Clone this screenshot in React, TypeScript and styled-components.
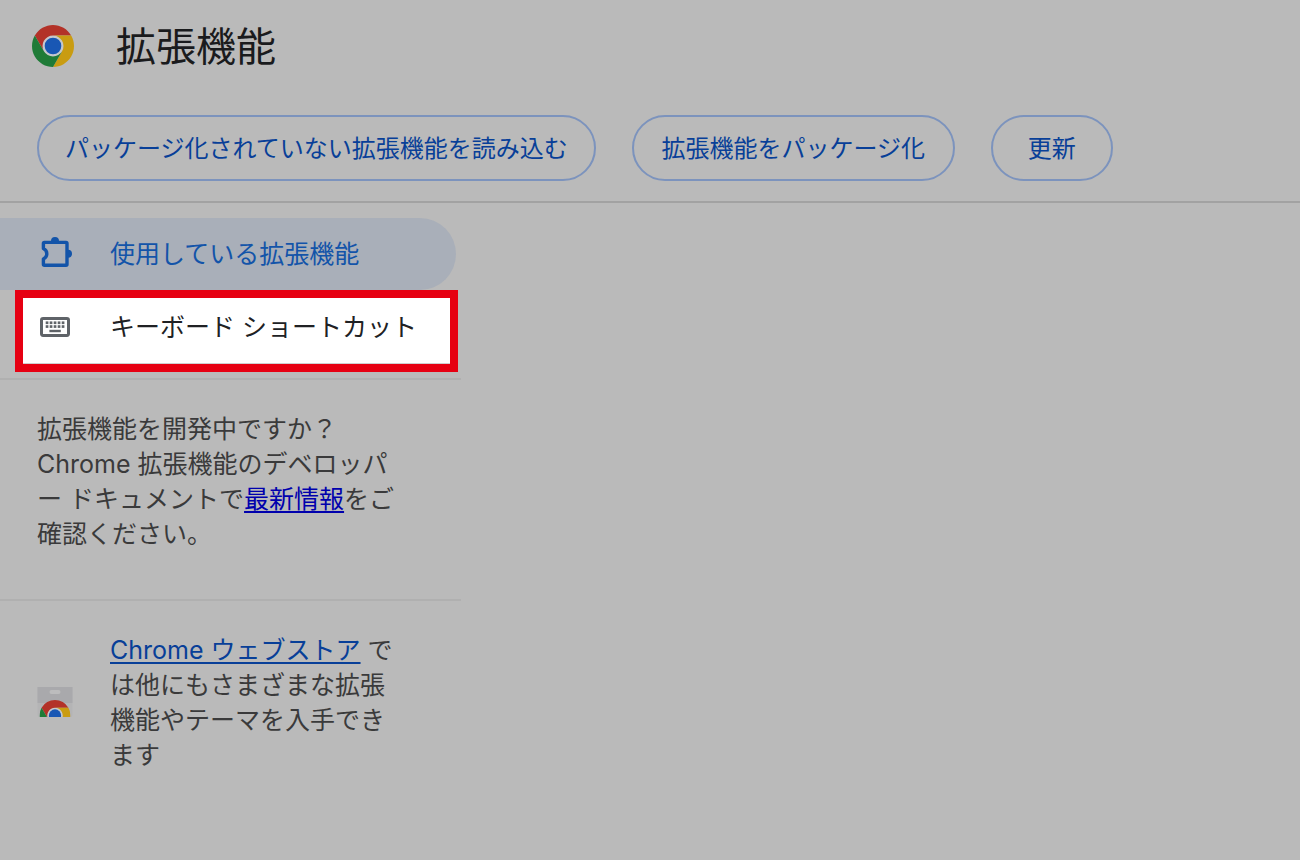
import React from "react";
import styled, { createGlobalStyle } from "styled-components";

const colors = {
  page: "#bababa",
  title: "#1a1b1d",
  body: "#3a3a3b",
  blue: "#083f98",
  navBlue: "#1354a9",
  plainLink: "#0000ad",
  buttonBorder: "#7c93bd",
  activeBg: "#a9afb9",
  headerLine: "#a2a2a2",
  sideLine: "#b0b0b0",
  mark: "#e60012",
};

const GlobalStyle = createGlobalStyle`
  *, *::before, *::after { box-sizing: border-box; }
  body {
    margin: 0;
    background: ${colors.page};
    font-family: Inter, "Noto Sans CJK JP", sans-serif;
    color: ${colors.body};
  }
`;

const Page = styled.div`
  min-height: 100vh;
  background: ${colors.page};
`;

const Header = styled.header`
  display: flex;
  flex-direction: column;
  gap: 23px;
  padding-bottom: 20px;
  border-bottom: 2px solid ${colors.headerLine};
`;

const TitleRow = styled.div`
  display: flex;
  align-items: center;
  gap: 42px;
  height: 92px;
  padding-left: 32px;
`;

const Title = styled.h1`
  margin: 0;
  padding-top: 2px;
  font-size: 40px;
  line-height: 60px;
  font-weight: 400;
  color: ${colors.title};
`;

const Toolbar = styled.div`
  display: flex;
  flex-wrap: wrap;
  gap: 36px;
  padding-left: 37px;
`;

const OutlineButton = styled.button<{ $minWidth?: number }>`
  height: 66px;
  min-width: ${({ $minWidth = 122 }) => $minWidth}px;
  padding: 2px 26px 0;
  border: 2px solid ${colors.buttonBorder};
  border-radius: 33px;
  background: transparent;
  color: ${colors.blue};
  font: inherit;
  font-size: 24px;
  line-height: 36px;
  white-space: nowrap;
  cursor: pointer;
`;

const Sidebar = styled.aside`
  width: 461px;
  padding-top: 15px;
`;

const Nav = styled.nav`
  display: flex;
  flex-direction: column;
  padding-bottom: 6px;
`;

const NavLink = styled.a<{ $variant: "active" | "marked" }>`
  display: flex;
  align-items: center;
  gap: 37px;
  font-size: 25px;
  line-height: 35px;
  text-decoration: none;
  white-space: nowrap;
  ${({ $variant }) =>
    $variant === "active"
      ? `
    height: 72px;
    margin-right: 5px;
    padding-left: 37px;
    border-radius: 0 36px 36px 0;
    background: ${colors.activeBg};
    color: ${colors.navBlue};
  `
      : `
    height: 82px;
    margin: 0 3px 0 15px;
    padding: 0 0 8px 14px;
    border: 8px solid ${colors.mark};
    background: #ffffff;
    box-shadow: inset 0 -1px 0 #cfcfcf;
    color: #202124;
  `}
`;

const Section = styled.section`
  display: flex;
  align-items: center;
  gap: 37px;
  padding: 32px 37px 47px;
  border-top: 2px solid ${colors.sideLine};
`;

const Text = styled.p`
  margin: 0;
  font-size: 25px;
  line-height: 35px;
  white-space: nowrap;
`;

const TextLink = styled.a<{ $color: string }>`
  color: ${({ $color }) => $color};
  text-decoration: underline;
  text-decoration-thickness: 2px;
  text-underline-offset: 3px;
`;

const Icon = styled.svg`
  display: block;
  flex: none;
`;

const ChromeShapes = () => (
  <>
    <circle cx="24" cy="24" r="12.4" fill="#c6c8cc" />
    <path fill="#b33228" d="M24 12H44.78A24 24 0 0 0 3.215 12L13.608 30A12 12 0 0 1 24 12Z" />
    <path fill="#c99c12" d="M34.39 30 24 48A24 24 0 0 0 44.78 12H24A12 12 0 0 1 34.39 30Z" />
    <path fill="#1f7b37" d="M13.609 30 3.218 12A24 24 0 0 0 24 48L34.39 30A12 12 0 0 1 13.609 30Z" />
    <circle cx="24" cy="24" r="9.5" fill="#1957b4" />
  </>
);

const ChromeLogo = () => (
  <Icon width="42" height="42" viewBox="0 0 48 48" aria-hidden="true">
    <ChromeShapes />
  </Icon>
);

const PuzzleIcon = () => (
  <Icon width="36" height="36" viewBox="0 0 36 36" aria-hidden="true">
    <path
      d="M7.400 6.400H29A1 1 0 0 1 30 7.400V28.300A1 1 0 0 1 29 29.300H7.400A1 1 0 0 1 6.400 28.300V23C8.800 21.800 9.800 20 9.800 17.800S8.800 13.800 6.400 12.600V7.400A1 1 0 0 1 7.400 6.400Z"
      fill="none"
      stroke={colors.navBlue}
      strokeWidth="3.4"
      strokeLinejoin="round"
    />
    <path
      d="M14 5.5V5A4 4 0 0 1 22 5V5.5ZM31 13.7A4 4 0 0 1 31 21.7Z"
      fill={colors.navBlue}
    />
  </Icon>
);

const KeyboardIcon = () => (
  <Icon width="36" height="36" viewBox="0 0 36 36" aria-hidden="true">
    <rect x="4.5" y="9.400" width="27" height="17" rx="1.6" fill="none" stroke="#5f6368" strokeWidth="3" />
    <g fill="#5f6368">
      {[0, 1, 2, 3, 4].map((i) => (
        <React.Fragment key={i}>
          <rect x={8.7 + i * 4} y="12.4" width="2.7" height="2.7" />
          <rect x={8.7 + i * 4} y="16.2" width="2.7" height="2.7" />
        </React.Fragment>
      ))}
      <rect x="12.4" y="20.8" width="11.4" height="2.4" />
    </g>
  </Icon>
);

const StoreIcon = () => (
  <Icon width="36" height="32" viewBox="0 1 36 32" aria-hidden="true">
    <path d="M0.5 1H35.5V29A2 2 0 0 1 33.5 31H2.5A2 2 0 0 1 0.5 29Z" fill="#b4b4b5" />
    <path d="M0.5 1H35.5V17H0.5Z" fill="#a9a9ac" />
    <rect x="12.5" y="4" width="11" height="4" rx="2" fill="#bcbcbd" />
    <svg x="2.5" y="14" width="31" height="17" viewBox="0 0 48 26.3">
      <ChromeShapes />
    </svg>
  </Icon>
);

export default function App() {
  return (
    <Page lang="ja">
      <GlobalStyle />
      <Header>
        <TitleRow>
          <ChromeLogo />
          <Title>拡張機能</Title>
        </TitleRow>
        <Toolbar>
          <OutlineButton type="button">パッケージ化されていない拡張機能を読み込む</OutlineButton>
          <OutlineButton type="button" $minWidth={323}>
            拡張機能をパッケージ化
          </OutlineButton>
          <OutlineButton type="button">更新</OutlineButton>
        </Toolbar>
      </Header>
      <Sidebar>
        <Nav>
          <NavLink href="#extensions" $variant="active" aria-current="page">
            <PuzzleIcon />
            使用している拡張機能
          </NavLink>
          <NavLink href="#shortcuts" $variant="marked">
            <KeyboardIcon />
            キーボード ショートカット
          </NavLink>
        </Nav>
        <Section>
          <Text>
            拡張機能を開発中ですか？
            <br />
            Chrome 拡張機能のデベロッパ
            <br />ー ドキュメントで
            <TextLink href="#docs" $color={colors.plainLink}>
              最新情報
            </TextLink>
            をご
            <br />
            確認ください。
          </Text>
        </Section>
        <Section>
          <StoreIcon />
          <Text>
            <TextLink href="#store" $color={colors.blue}>
              Chrome ウェブストア
            </TextLink>{" "}
            で
            <br />
            は他にもさまざまな拡張
            <br />
            機能やテーマを入手でき
            <br />
            ます
          </Text>
        </Section>
      </Sidebar>
    </Page>
  );
}
